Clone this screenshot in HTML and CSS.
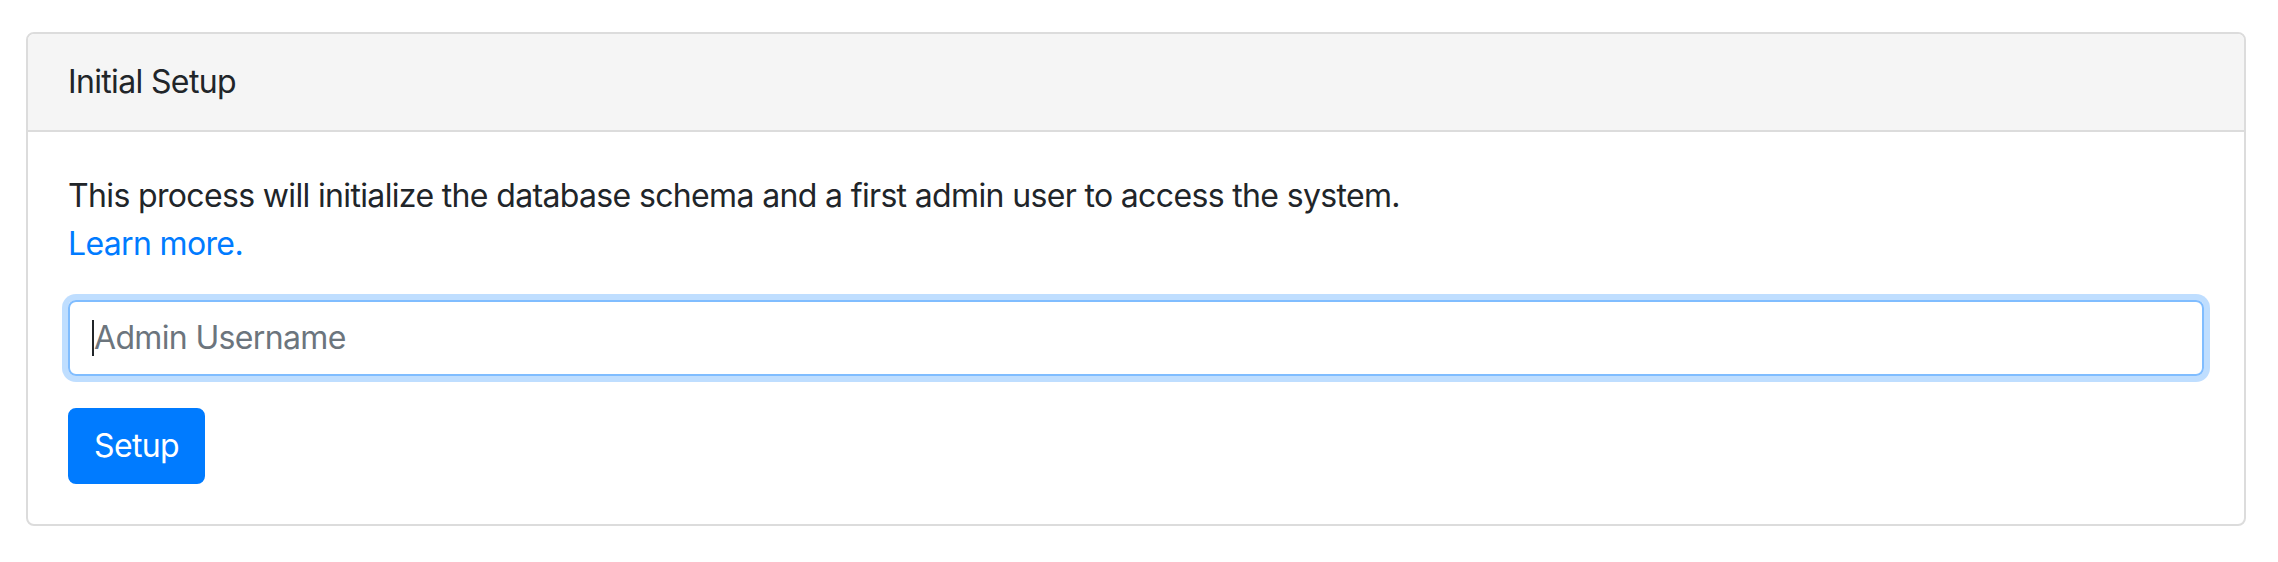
FILE: index.html
```html
<!DOCTYPE html>
<html lang="en">
<head>
<meta charset="utf-8">
<title>Initial Setup</title>
<link rel="stylesheet" href="styles.css">
</head>
<body>
<div class="card">
  <div class="card-header">Initial Setup</div>
  <div class="card-body">
    <p class="intro">This process will initialize the database schema and a first admin user to access the system.<br><a href="#" class="link">Learn more.</a></p>
    <div class="form-group">
      <div class="input"><span class="caret"></span><span class="placeholder">Admin Username</span></div>
    </div>
    <button class="btn" type="button">Setup</button>
  </div>
</div>
</body>
</html>
```
FILE: styles.css
```css
html, body {
  margin: 0;
  background: #ffffff;
}
body {
  padding: 32px 32px 0 26px;
  font-family: Inter, "Noto Sans", "Liberation Sans", sans-serif;
  font-size: 32px;
  line-height: 48px;
  letter-spacing: -0.65px;
  color: #212529;
}
.card {
  border: 2px solid #dcdcdc;
  border-radius: 8px;
  overflow: hidden;
  background: #fff;
}
.card-header {
  background: #f5f5f5;
  border-bottom: 2px solid #dcdcdc;
  padding: 24px 40px;
  height: 48px;
}
.card-body {
  padding: 40px;
}
.intro {
  margin: 0 0 32px 0;
}
.link {
  color: #007bff;
  text-decoration: none;
}
.form-group {
  margin-bottom: 32px;
}
.input {
  box-sizing: border-box;
  height: 76px;
  border: 2px solid #80bdff;
  border-radius: 8px;
  box-shadow: 0 0 0 6px rgba(0, 123, 255, 0.25);
  padding: 0 24px;
  display: flex;
  align-items: center;
}
.caret {
  width: 2px;
  height: 36px;
  background: #212529;
  margin-left: -2px;
}
.placeholder {
  color: #6c757d;
}
.btn {
  display: block;
  font-family: inherit;
  font-size: 32px;
  line-height: 48px;
  letter-spacing: inherit;
  color: #fff;
  background: #007bff;
  border: 2px solid #007bff;
  border-radius: 8px;
  padding: 12px 24px;
  margin: 0;
}
```
